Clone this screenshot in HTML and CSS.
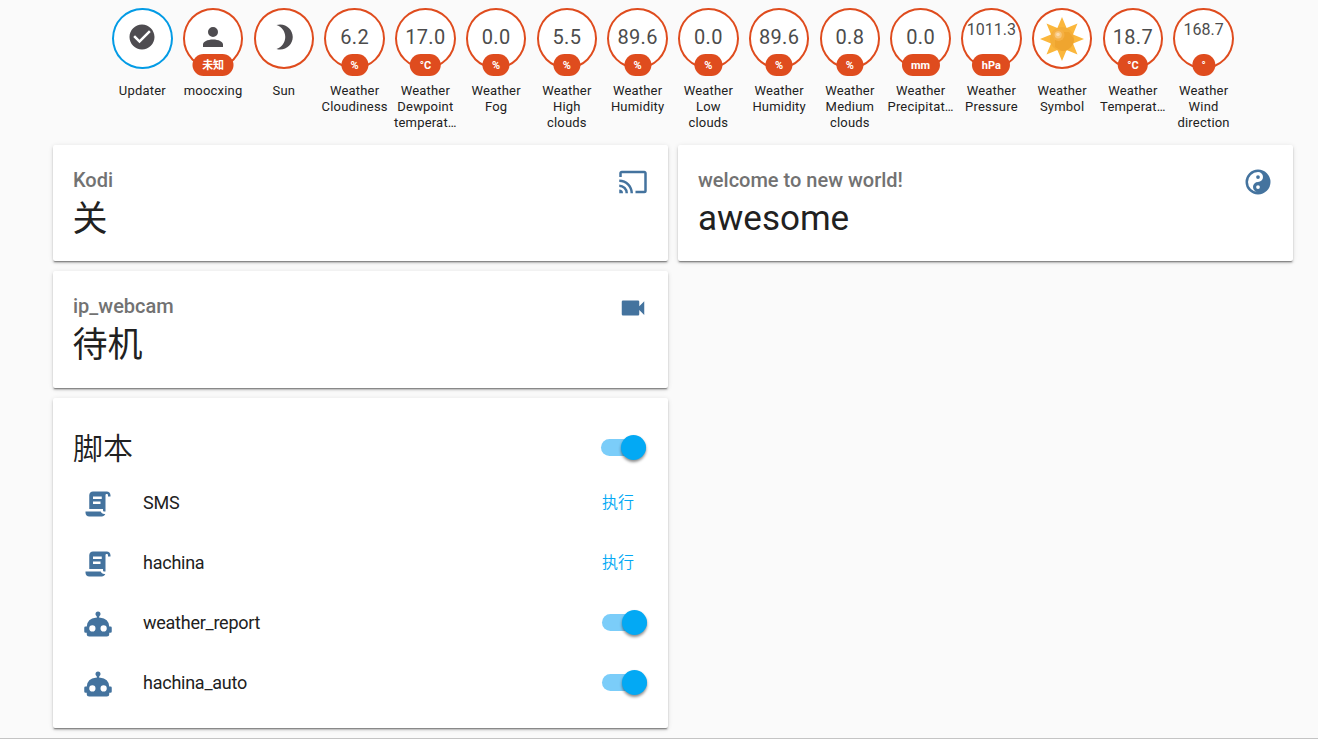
FILE: index.html
```
<!DOCTYPE html>
<html lang="zh-CN">
<head>
<meta charset="utf-8">
<title>Home</title>
<link rel="stylesheet" href="styles.css">
</head>
<body>
<svg class="defs" aria-hidden="true">
  <symbol id="cast" viewBox="0 0 24 24"><path d="M1,10V12A9,9 0 0,1 10,21H12C12,14.92 7.07,10 1,10M1,14V16A5,5 0 0,1 6,21H8A7,7 0 0,0 1,14M1,18V21H4A3,3 0 0,0 1,18M21,3H3C1.89,3 1,3.89 1,5V8H3V5H21V19H14V21H21A2,2 0 0,0 23,19V5C23,3.89 22.1,3 21,3Z"/></symbol>
  <symbol id="video" viewBox="0 0 24 24"><path d="M17,10.5V7A1,1 0 0,0 16,6H4A1,1 0 0,0 3,7V17A1,1 0 0,0 4,18H16A1,1 0 0,0 17,17V13.5L21,17.5V6.5L17,10.5Z"/></symbol>
  <symbol id="yinyang" viewBox="0 0 24 24"><path fill-rule="evenodd" d="M12,2A10,10 0 0,1 12,22A10,10 0 0,1 12,2M12,4A8,8 0 0,0 12,20A4,4 0 0,1 12,12A4,4 0 0,0 12,4M12,6.5A1.5,1.5 0 0,1 12,9.5A1.5,1.5 0 0,1 12,6.5M12,14.5A1.5,1.5 0 0,0 12,17.5A1.5,1.5 0 0,0 12,14.5Z"/></symbol>
  <symbol id="script" viewBox="0 0 24 24"><path fill-rule="evenodd" d="M17.8,20C17.4,21.2 16.3,22 15,22H5C3.3,22 2,20.7 2,19V18H5L14.2,18C14.6,19.2 15.7,20 17,20H17.8M19,2C20.7,2 22,3.3 22,5V6H20V5C20,4.4 19.6,4 19,4C18.4,4 18,4.4 18,5V18H17C16.4,18 16,17.6 16,17V16H5V5C5,3.3 6.3,2 8,2H19M8,6V8H15V6H8M8,10V12H14V10H8Z"/></symbol>
  <symbol id="robot" viewBox="0 0 24 24"><path fill-rule="evenodd" d="M12,2A2,2 0 0,1 14,4C14,4.74 13.6,5.39 13,5.73V7H14A7,7 0 0,1 21,14H22A1,1 0 0,1 23,15V18A1,1 0 0,1 22,19H21V20A2,2 0 0,1 19,22H5A2,2 0 0,1 3,20V19H2A1,1 0 0,1 1,18V15A1,1 0 0,1 2,14H3A7,7 0 0,1 10,7H11V5.73C10.4,5.39 10,4.74 10,4A2,2 0 0,1 12,2M7.5,13A2.5,2.5 0 0,0 7.5,18A2.5,2.5 0 0,0 7.5,13M16.5,13A2.5,2.5 0 0,0 16.5,18A2.5,2.5 0 0,0 16.5,13Z"/></symbol>
</svg>

<main class="view">
  <section class="badges">
    <div class="badge"><div class="circle blue"><svg class="icon" viewBox="0 0 24 24"><path d="M12 2C6.48 2 2 6.48 2 12s4.48 10 10 10 10-4.48 10-10S17.52 2 12 2zm-2 15l-5-5 1.41-1.41L10 14.17l7.59-7.59L19 8l-9 9z"/></svg></div><div class="name">Updater</div></div>
    <div class="badge"><div class="circle"><svg class="icon" viewBox="0 0 24 24"><path d="M12,4A4,4 0 0,1 16,8A4,4 0 0,1 12,12A4,4 0 0,1 8,8A4,4 0 0,1 12,4M12,14C16.42,14 20,15.79 20,18V20H4V18C4,15.79 7.58,14 12,14Z"/></svg><span class="unit">未知</span></div><div class="name">moocxing</div></div>
    <div class="badge"><div class="circle"><svg class="icon" viewBox="0 0 24 24"><path d="M9 2c-1.05 0-2.05.16-3 .46 4.06 1.27 7 5.06 7 9.54 0 4.48-2.94 8.27-7 9.54.95.3 1.95.46 3 .46 5.52 0 10-4.48 10-10S14.52 2 9 2z"/></svg></div><div class="name">Sun</div></div>
    <div class="badge"><div class="circle"><span class="value">6.2</span><span class="unit">%</span></div><div class="name">Weather<br>Cloudiness</div></div>
    <div class="badge"><div class="circle"><span class="value">17.0</span><span class="unit">°C</span></div><div class="name">Weather<br>Dewpoint<br>temperat…</div></div>
    <div class="badge"><div class="circle"><span class="value">0.0</span><span class="unit">%</span></div><div class="name">Weather<br>Fog</div></div>
    <div class="badge"><div class="circle"><span class="value">5.5</span><span class="unit">%</span></div><div class="name">Weather<br>High<br>clouds</div></div>
    <div class="badge"><div class="circle"><span class="value">89.6</span><span class="unit">%</span></div><div class="name">Weather<br>Humidity</div></div>
    <div class="badge"><div class="circle"><span class="value">0.0</span><span class="unit">%</span></div><div class="name">Weather<br>Low<br>clouds</div></div>
    <div class="badge"><div class="circle"><span class="value">89.6</span><span class="unit">%</span></div><div class="name">Weather<br>Humidity</div></div>
    <div class="badge"><div class="circle"><span class="value">0.8</span><span class="unit">%</span></div><div class="name">Weather<br>Medium<br>clouds</div></div>
    <div class="badge"><div class="circle"><span class="value">0.0</span><span class="unit">mm</span></div><div class="name">Weather<br>Precipitat…</div></div>
    <div class="badge"><div class="circle"><span class="value big">1011.3</span><span class="unit">hPa</span></div><div class="name">Weather<br>Pressure</div></div>
    <div class="badge"><div class="circle"><svg class="sun" viewBox="-22 -22 44 44">
      <path fill="#fbb73c" d="M0,-22L4.6,-11L15.5,-15.5L11,-4.6L22,0L11,4.6L15.5,15.5L4.6,11L0,22L-4.6,11L-15.5,15.5L-11,4.6L-22,0L-11,-4.6L-15.5,-15.5L-4.6,-11Z"/>
      <circle r="12" fill="#f4ae38"/><path fill="#efa52f" d="M0,0V-7L7,-7L12,0A12,12 0 0,1 0,12L-7,8V0Z"/>
      <circle cx="-3.5" cy="-4" r="6" fill="#f5b044"/><circle cx="-3.8" cy="-4.2" r="3.6" fill="#f8c678"/><circle cx="-4" cy="-4.5" r="1.8" fill="#fbdcae"/></svg></div><div class="name">Weather<br>Symbol</div></div>
    <div class="badge"><div class="circle"><span class="value">18.7</span><span class="unit">°C</span></div><div class="name">Weather<br>Temperat…</div></div>
    <div class="badge"><div class="circle"><span class="value big">168.7</span><span class="unit">°</span></div><div class="name">Weather<br>Wind<br>direction</div></div>
  </section>

  <div class="columns">
    <div class="column">
      <article class="card sensor"><div><div class="label">Kodi</div><div class="state cjk">关</div></div><svg class="glyph"><use href="#cast"/></svg></article>
      <article class="card sensor"><div><div class="label">ip_webcam</div><div class="state cjk">待机</div></div><svg class="glyph"><use href="#video"/></svg></article>
      <article class="card entities">
        <header class="head"><h2>脚本</h2><span class="toggle"></span></header>
        <div class="row"><svg class="glyph low"><use href="#script"/></svg><span class="title">SMS</span><span class="run">执行</span></div>
        <div class="row"><svg class="glyph low"><use href="#script"/></svg><span class="title">hachina</span><span class="run">执行</span></div>
        <div class="row"><svg class="glyph low"><use href="#robot"/></svg><span class="title">weather_report</span><span class="toggle"></span></div>
        <div class="row"><svg class="glyph low"><use href="#robot"/></svg><span class="title">hachina_auto</span><span class="toggle"></span></div>
      </article>
    </div>
    <div class="column">
      <article class="card sensor"><div><div class="label">welcome to new world!</div><div class="state">awesome</div></div><svg class="glyph"><use href="#yinyang"/></svg></article>
    </div>
  </div>
</main>
</body>
</html>
```
FILE: styles.css
```
* { box-sizing: border-box; }

body {
  margin: 0;
  height: 739px;
  overflow: hidden;
  background: #fafafa;
  border-bottom: 1px solid #c4c4c4;
  color: #212121;
  font-family: Roboto, "Noto Sans CJK SC", sans-serif;
}

.defs { display: none; }
.view { padding: 8px 25px 0 53px; }

.badges {
  display: flex;
  justify-content: center;
  height: 137px;
}
.badge {
  width: 70.75px;
  flex: none;
  display: flex;
  flex-direction: column;
  align-items: center;
}
.circle {
  position: relative;
  width: 60.5px;
  height: 61px;
  border: 2px solid #df4c1e;
  border-radius: 50%;
  background: #fff;
  color: #4c4c4c;
  display: flex;
  justify-content: center;
  align-items: center;
}
.circle.blue { border-color: #039be5; }
.icon { width: 30px; height: 30px; fill: #4e4c50; margin-top: -3px; }
.sun { width: 44px; height: 44px; }
.value { font-size: 20px; line-height: 24px; letter-spacing: 0.35px; margin-top: -4px; }
.value.big { font-size: 16px; margin-top: -18px; letter-spacing: 0; }
.unit {
  position: absolute;
  bottom: -9px;
  left: 50%;
  transform: translateX(-50%);
  height: 22px;
  padding: 1px 9.5px 0;
  border-radius: 11px;
  background: #df4c1e;
  color: #fff;
  font-size: 11px;
  font-weight: 700;
  line-height: 21px;
  white-space: nowrap;
}
.name {
  margin-top: 14px;
  font-size: 13px;
  line-height: 16px;
  letter-spacing: 0.2px;
  text-align: center;
  white-space: nowrap;
}

.columns { display: grid; grid-template-columns: 615px 615px; gap: 10px; align-items: start; }
.column { display: grid; gap: 10px; }
.card {
  background: #fff;
  border-radius: 2px;
  box-shadow: 0 2px 2px rgba(0, 0, 0, 0.2), 0 1px 5px rgba(0, 0, 0, 0.12), 0 2px 1px -1px rgba(0, 0, 0, 0.3);
}
.sensor {
  height: 116.25px;
  padding: 22px 20px 0;
  display: flex;
  justify-content: space-between;
}
.label { font-size: 20px; font-weight: 500; line-height: 26px; color: #727272; }
.state { font-size: 35px; line-height: 52px; }
.state.cjk { padding-top: 1px; margin-left: -0.5px; }
.glyph { width: 30px; height: 30px; fill: #44739e; }

.entities { height: 330px; padding: 20px 20px 0; }
.head { height: 55px; display: flex; justify-content: space-between; align-items: center; padding: 5px 2px 0 0; }
.head h2 { margin: 0; padding-top: 2px; font-size: 30px; font-weight: 350; line-height: 40px; }
.row { height: 60px; display: flex; align-items: center; padding: 0 1px 0 10px; }
.title { flex: 1; padding-left: 30px; font-size: 18px; letter-spacing: -0.25px; }
.row .low { margin-top: 3px; }
.run { padding: 0 13px 3px 0; color: #03a9f4; font-size: 16px; font-weight: 350; }

.toggle {
  position: relative;
  width: 45px;
  height: 17px;
  border-radius: 9px;
  background: #7bcdf9;
}
.toggle::after {
  content: "";
  position: absolute;
  top: -4px;
  right: 0;
  width: 25px;
  height: 25px;
  border-radius: 50%;
  background: #03a9f4;
  box-shadow: 0 2px 3px rgba(0, 0, 0, 0.45);
}
```
